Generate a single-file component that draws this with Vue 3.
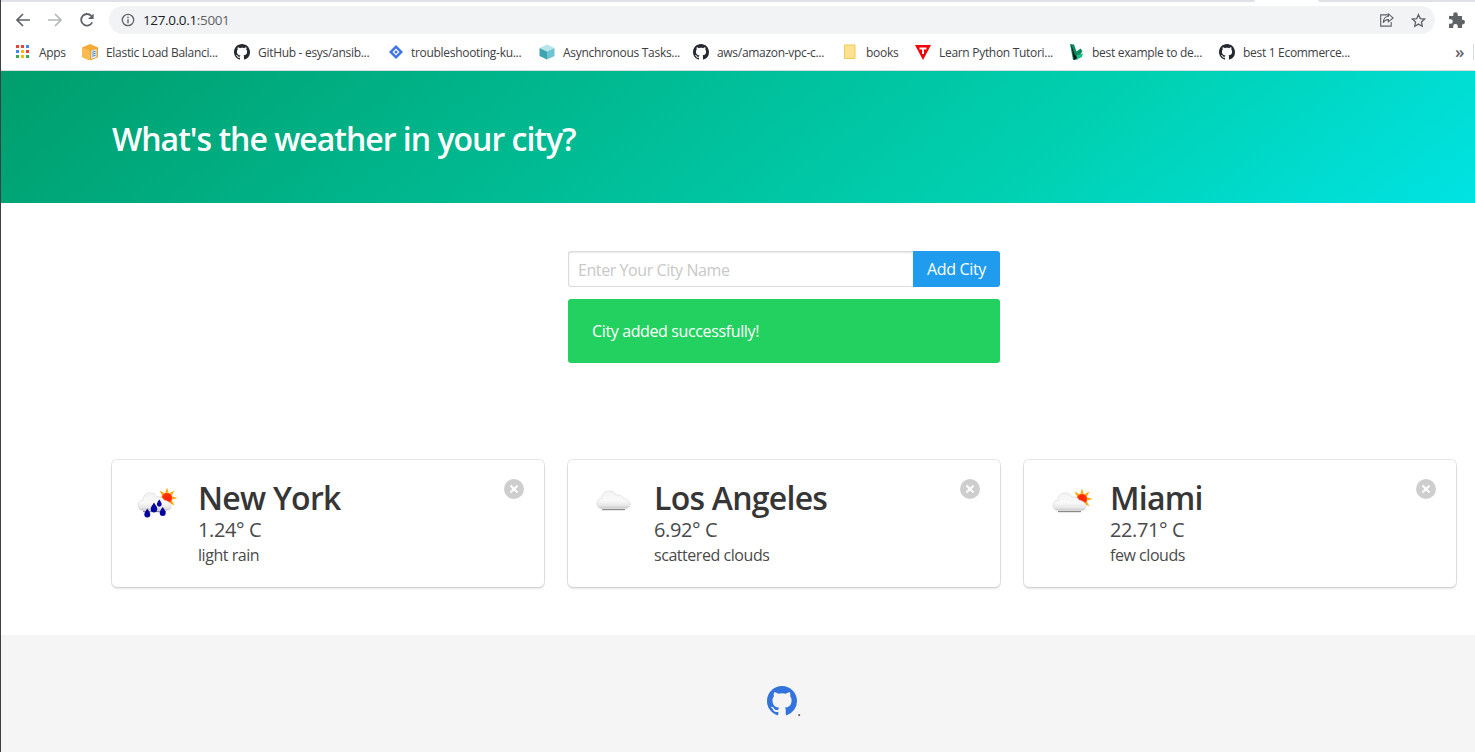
<script setup>
const gh = 'M8 0C3.58 0 0 3.58 0 8c0 3.54 2.29 6.53 5.47 7.59.4.07.55-.17.55-.38 0-.19-.01-.82-.01-1.49-2.01.37-2.53-.49-2.69-.94-.09-.23-.48-.94-.82-1.13-.28-.15-.68-.52-.01-.53.63-.01 1.08.58 1.23.82.72 1.21 1.87.87 2.33.66.07-.52.28-.87.51-1.07-1.78-.2-3.64-.89-3.64-3.95 0-.87.31-1.59.82-2.15-.08-.2-.36-1.02.08-2.12 0 0 .67-.21 2.2.82.64-.18 1.32-.27 2-.27.68 0 1.36.09 2 .27 1.53-1.04 2.2-.82 2.2-.82.44 1.1.16 1.92.08 2.12.51.56.82 1.27.82 2.15 0 3.07-1.87 3.75-3.65 3.95.29.25.54.73.54 1.48 0 1.07-.01 1.93-.01 2.2 0 .21.15.46.55.38A8.013 8.013 0 0016 8c0-4.42-3.58-8-8-8z'
const bookmarks = [
  { label: 'Apps', icon: 'apps', width: 66, gap: 9 },
  { label: 'Elastic Load Balanci...', icon: 'box', width: 152, gap: 8 },
  { label: 'GitHub - esys/ansib...', icon: 'gh', width: 154, gap: 8 },
  { label: 'troubleshooting-ku...', icon: 'diamond', width: 151, gap: 7 },
  { label: 'Asynchronous Tasks...', icon: 'cube', width: 154, gap: 8 },
  { label: 'aws/amazon-vpc-c...', icon: 'gh', width: 151, gap: 8 },
  { label: 'books', icon: 'folder', width: 71, gap: 6 },
  { label: 'Learn Python Tutori...', icon: 'tri', width: 154, gap: 8 },
  { label: 'best example to de...', icon: 'leaf', width: 150, gap: 7 },
  { label: 'best 1 Ecommerce...', icon: 'gh', width: 200, gap: 8 }
]
const appDots = ['#ea4335','#ea4335','#4285f4','#4285f4','#fbbc04','#ea4335','#34a853','#fbbc04','#34a853']
const cities = [
  { name: 'New York', temp: '1.24° C', desc: 'light rain', kind: 'rain' },
  { name: 'Los Angeles', temp: '6.92° C', desc: 'scattered clouds', kind: 'cloud' },
  { name: 'Miami', temp: '22.71° C', desc: 'few clouds', kind: 'sun' }
]
const rays = [0, 45, 90, 135, 180, 225, 270, 315]
const dropPath = 'M0-5C1.500-2.500 3-1 3 1a3 3 0 0 1-6 0C-3-1-1.500-2.500 0-5z'
const drops = [
  { x: 11.3, y: 38.5, s: 1 },
  { x: 18, y: 33, s: 1.1 },
  { x: 23.3, y: 28.5, s: .8 },
  { x: 26.7, y: 37, s: 1 }
]
</script>

<template>
  <div class="page">
    <div class="tabstrip"><span class="strip-a"></span><span class="strip-b"></span></div>
    <div class="toolbar">
      <svg class="nav" viewBox="0 0 16 16"><path d="M15 8H2.500M8 2 2 8l6 6" fill="none" stroke="#5f6368" stroke-width="1.700"/></svg>
      <svg class="nav" viewBox="0 0 16 16"><path d="M1 8h12.500M8 2l6 6-6 6" fill="none" stroke="#b4b6b9" stroke-width="1.700"/></svg>
      <svg class="nav" viewBox="0 0 16 16"><path d="M13.200 10.400A5.800 5.800 0 1 1 12.400 4" fill="none" stroke="#5f6368" stroke-width="1.800"/><path d="M14.600 1.500v5.600H9z" fill="#5f6368"/></svg>
      <div class="omnibox">
        <svg class="info" viewBox="0 0 14 14"><circle cx="7" cy="7" r="5.700" fill="none" stroke="#5f6368" stroke-width="1.300"/><path d="M7 6.200v4M7 3.800v1.400" stroke="#5f6368" stroke-width="1.400"/></svg>
        <span class="url">127.0.0.1<span class="port">:5001</span></span>
        <span class="grow"></span>
        <svg class="omni-icon" viewBox="0 0 16 16"><path d="M11 2h-9.200v12H13V9.500" fill="none" stroke="#5f6368" stroke-width="1.200"/><path d="M10 1l5 4.200-5 4.200V7C7.500 7 5.500 8 4.500 10.500 4.500 7 6.500 3.800 10 3.500z" fill="none" stroke="#5f6368" stroke-width="1.200"/></svg>
        <svg class="omni-icon star" viewBox="0 0 16 16"><path d="M8 1.800l1.900 4.200 4.600.5-3.400 3.100.9 4.500L8 11.800l-4 2.300.9-4.500L1.500 6.500l4.600-.5z" fill="none" stroke="#5f6368" stroke-width="1.400"/></svg>
      </div>
      <svg class="puzzle" viewBox="0 0 16 16"><path d="M0 4h4.200V2.600a2.300 2.300 0 0 1 4.600 0V4H13v3.800h.7a2.300 2.300 0 0 1 0 4.600H13V16H8.800v-1.700a2.300 2.300 0 0 0-4.600 0V16H0v-4.200h1.500a2.300 2.300 0 0 0 0-4.600H0z" fill="#5f6368"/></svg>
    </div>
    <div class="bookmarks">
      <div v-for="b in bookmarks" :key="b.label" class="bookmark" :style="{ width: b.width + 'px' }">
        <div v-if="b.icon === 'apps'" class="apps" :style="{ marginRight: b.gap + 'px' }"><i v-for="(c, i) in appDots" :key="i" :style="{ background: c }"></i></div>
        <svg v-else class="bm-icon" viewBox="0 0 16 16" :style="{ marginRight: b.gap + 'px' }">
          <path v-if="b.icon === 'gh'" :d="gh" fill="#24292e"/>
          <g v-else-if="b.icon === 'box'">
            <path d="M0 3.500 8 0l8 3.500V13l-8 3.500L0 13z" fill="#f5ab35"/><path d="M0 3.500l8 3V16.500L0 13z" fill="#f7bb4f"/><path d="M8 6.500l8-3V13l-8 3.500z" fill="#f0a02a"/><path d="M9.200 6.800l5.400-1.800v8l-5.400 1.900z" fill="#dcebf8"/><path d="M10.200 8.200l3.400-1M10.200 10.200l3.400-1M10.200 12.200l3.400-1" stroke="#3b7dc4" stroke-width=".9"/>
          </g>
          <g v-else-if="b.icon === 'diamond'">
            <path d="M8 1l7 7-7 7-7-7z" fill="#3f74e6"/><path d="M8 4.500l3.500 3.500-3.500 3.500L4.500 8z" fill="#fff"/><circle cx="8" cy="8" r="1.500" fill="#3f74e6"/>
          </g>
          <g v-else-if="b.icon === 'cube'">
            <path d="M8 .500l7.500 3.500L8 7.500.5 4z" fill="#b5e4ea"/><path d="M.5 4L8 7.500v8L.5 12z" fill="#3fa4b2"/><path d="M15.500 4L8 7.500v8l7.500-3.500z" fill="#6cc5d1"/>
          </g>
          <path v-else-if="b.icon === 'folder'" d="M.5 1h10.500v13.500H.5z" fill="#fde293" stroke="#f0c94e" stroke-width="1"/>
          <g v-else-if="b.icon === 'tri'">
            <path d="M0 1h16L8 16z" fill="#f40009"/><path d="M4.500 3.500h7v2H9V10H7V5.500H4.500z" fill="#fff"/>
          </g>
          <g v-else>
            <path d="M1 0l4 .500 2.500 7 4-3 2 2.500-5 8.500L4 16z" fill="#0d8a5f"/><path d="M2 0l3 9 3 5-3 2z" fill="#111"/><path d="M8 11l6-1.500-1 3.500-5 2.500z" fill="#1bbf85"/>
          </g>
        </svg>
        <span class="bm-label">{{ b.label }}</span>
      </div>
      <span class="chev">»</span>
      <span class="chev-line"></span>
    </div>

    <header class="hero">
      <h1 class="hero-title">What's the weather in your city?</h1>
    </header>

    <main class="main">
      <div class="grid">
        <div class="col-mid">
          <form class="search" @submit.prevent>
            <input class="city-input" type="text" placeholder="Enter Your City Name" />
            <button class="add-btn" type="button">Add City</button>
          </form>
          <div class="notice">City added successfully!</div>
        </div>
      </div>
      <div class="grid cards">
        <article v-for="c in cities" :key="c.name" class="card">
          <svg class="weather" viewBox="0 0 50 50">
            <defs>
              <linearGradient :id="'cl-' + c.kind" x1="0" y1="0" x2="0" y2="1">
                <stop offset="0" stop-color="#f4f4f4"/><stop offset=".55" stop-color="#f9f9f9"/><stop offset=".85" stop-color="#e6e6e6"/><stop offset="1" stop-color="#c4c4c4"/>
              </linearGradient>
              <radialGradient :id="'sn-' + c.kind">
                <stop offset="0" stop-color="#ff2000"/><stop offset=".75" stop-color="#ff3000"/><stop offset="1" stop-color="#ff7a00"/>
              </radialGradient>
              <filter :id="'bl-' + c.kind" x="-20%" y="-20%" width="140%" height="140%"><feGaussianBlur stdDeviation=".5"/></filter>
            </defs>
            <g v-if="c.kind !== 'cloud'" :transform="c.kind === 'rain' ? 'translate(31 23)' : 'translate(34 24)'">
              <path v-for="r in rays" :key="r" :transform="'rotate(' + r + ')'" d="M-1.600 -5.500 0 -10.500 1.600 -5.500z" fill="#ffa600"/>
              <circle r="5.500" :fill="'url(#sn-' + c.kind + ')'"/>
            </g>
            <g :transform="c.kind === 'rain' ? 'translate(-3 2)' : c.kind === 'cloud' ? 'translate(0 0)' : 'translate(0 2)'" :filter="'url(#bl-' + c.kind + ')'">
              <path d="M10 34.500h23" stroke="#8a8a8a" stroke-width="1.400"/>
              <path d="M10 33.500C6.500 33.500 5 31 5 28.500 5 25.500 7 23.500 10 23.200 10 19 13 16 17 16c4 0 6 2 7 4.200 2.500-1 6 .3 7 3C35 24 38 26 38 29.200c0 3-2 4.300-5 4.300z" :fill="'url(#cl-' + c.kind + ')'" stroke="#dcdcdc" stroke-width=".8"/>
            </g>
            <g v-if="c.kind === 'rain'" fill="#0505a0">
              <path v-for="(d, i) in drops" :key="i" :d="dropPath" :transform="'translate(' + d.x + ' ' + d.y + ') scale(' + d.s + ')'"/>
            </g>
          </svg>
          <div class="info-block">
            <h2 class="city">{{ c.name }}</h2>
            <div class="temp">{{ c.temp }}</div>
            <div class="desc">{{ c.desc }}</div>
          </div>
          <button class="delete" type="button" aria-label="remove"></button>
        </article>
      </div>
    </main>

    <footer class="footer">
      <div class="grid">
        <div class="foot-mid">
          <svg class="foot-gh" viewBox="0 0 16 16"><path :d="gh" fill="#3273dc"/></svg><span class="dot">.</span>
        </div>
      </div>
    </footer>
  </div>
</template>

<style scoped>
.page {
  height: 752px;
  overflow: hidden;
  border-left: 1px solid #3c4043;
  display: flex;
  flex-direction: column;
  font-family: "Open Sans", "Noto Sans", sans-serif;
  color: #4a4a4a;
  background: #fff;
}
.tabstrip { height: 2px; display: flex; flex: none; }
.strip-a { width: 1254px; background: #dee1e6; border-bottom-right-radius: 2px; }
.strip-b { margin-left: 63px; flex: 1; background: #dee1e6; border-bottom-left-radius: 2px; }
.toolbar { height: 34px; flex: none; display: flex; align-items: flex-start; padding: 4px 10px 0 14px; box-sizing: border-box; }
.nav { width: 16px; height: 16px; margin: 6px 16px 0 0; flex: none; }
.nav:nth-child(3) { margin-right: 14px; }
.omnibox { flex: 1; height: 28px; background: #f1f3f4; border-radius: 14px; display: flex; align-items: center; padding: 0 9px 0 12px; }
.info { width: 14px; height: 14px; flex: none; }
.url { margin-left: 8px; font-size: 13.500px; color: #202124; letter-spacing: -.35px; }
.port { color: #5f6368; }
.grow { flex: 1; }
.omni-icon { width: 15px; height: 15px; flex: none; }
.star { margin-left: 17px; }
.puzzle { width: 16px; height: 16px; margin: 6px 0 0 14px; flex: none; }
.bookmarks { height: 35px; flex: none; display: flex; align-items: center; padding: 0 0 2px 15px; border-bottom: 1px solid #dadce0; box-sizing: border-box; position: relative; }
.bookmark { display: flex; align-items: center; flex: none; }
.apps { width: 14px; height: 14px; display: grid; grid-template-columns: repeat(3, 3px); grid-auto-rows: 3px; gap: 2px; flex: none; }
.apps i { display: block; }
.bm-icon { width: 16px; height: 16px; flex: none; }
.bm-label { font-size: 12px; color: #3c4043; white-space: nowrap; letter-spacing: -.3px; }
.chev { position: absolute; left: 1454px; top: 4px; font-size: 17px; font-weight: 600; color: #5f6368; }
.chev-line { position: absolute; left: 1472px; top: 8px; width: 1px; height: 16px; background: #dadce0; }
.hero { height: 132px; flex: none; display: flex; align-items: center; padding: 3px 0 0 111px; box-sizing: border-box; background: linear-gradient(141deg, #009e6c 0%, #00d1b2 71%, #00e3e3 100%); }
.hero-title { margin: 0; color: #fff; font-size: 32px; font-weight: 600; letter-spacing: -1px; line-height: 1.125; }
.main { flex: none; height: 432px; padding: 48px 0 0 111px; box-sizing: border-box; }
.grid { display: grid; grid-template-columns: repeat(3, 432px); gap: 24px; }
.col-mid { grid-column: 2; display: flex; flex-direction: column; gap: 12px; }
.search { display: flex; height: 36px; margin: 0; }
.city-input { flex: 1; min-width: 0; height: 36px; box-sizing: border-box; border: 1px solid #dbdbdb; border-right: 0; border-radius: 3px 0 0 3px; padding: 2px 9px 0; font: 16px "Open Sans", sans-serif; letter-spacing: -.42px; box-shadow: inset 0 1px 2px rgba(10,10,10,.1); outline: none; }
.city-input::placeholder { color: #c8c8c8; opacity: 1; }
.add-btn { width: 87px; height: 36px; border: 0; padding: 0; background: #209cee; color: #fff; border-radius: 0 3px 3px 0; font: 16px "Open Sans", sans-serif; letter-spacing: -.35px; }
.notice { height: 64px; box-sizing: border-box; padding: 0 24px; display: flex; align-items: center; background: #23d160; color: #fff; border-radius: 3px; font-size: 16px; letter-spacing: -.37px; }
.cards { margin-top: 97px; }
.card { position: relative; height: 127px; box-sizing: border-box; display: flex; align-items: flex-start; padding: 15px 24px 0; background: #fff; border-radius: 5px; box-shadow: 0 2px 3px rgba(10,10,10,.1), 0 0 0 1px rgba(10,10,10,.1); }
.weather { width: 50px; height: 50px; flex: none; margin-right: 12px; }
.info-block { padding-top: 3px; }
.city { margin: 0; font-size: 32px; font-weight: 600; line-height: 40px; color: #363636; letter-spacing: -.75px; }
.temp { font-size: 20px; line-height: 24px; letter-spacing: -.4px; color: #4a4a4a; }
.desc { font-size: 16px; line-height: 26px; letter-spacing: -.45px; color: #4a4a4a; }
.delete { position: absolute; top: 19px; right: 20px; width: 20px; height: 20px; padding: 0; border: 0; border-radius: 50%; background: rgba(10,10,10,.2); }
.delete::before, .delete::after { content: ""; position: absolute; left: 50%; top: 50%; background: #fff; transform: translate(-50%, -50%) rotate(45deg); }
.delete::before { width: 10px; height: 2px; }
.delete::after { width: 2px; height: 10px; }
.footer { flex: 1; background: #f5f5f5; padding: 51px 0 0 111px; box-sizing: border-box; }
.foot-mid { grid-column: 2; display: flex; justify-content: center; align-items: flex-end; }
.foot-gh { width: 30px; height: 30px; display: block; flex: none; }
.dot { font-size: 14px; line-height: 11px; color: #363636; }
</style>
